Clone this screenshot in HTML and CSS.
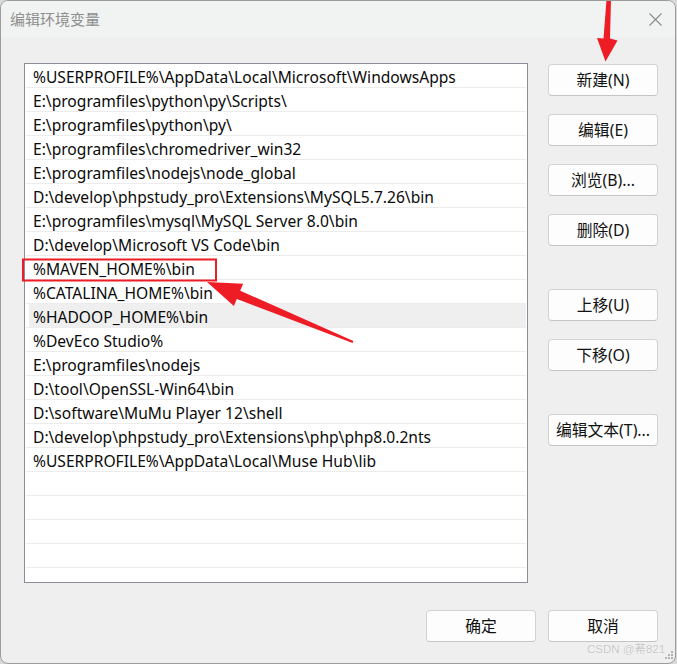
FILE: index.html
```html
<!DOCTYPE html>
<html lang="zh-CN">
<head>
<meta charset="utf-8">
<title>编辑环境变量</title>
<link rel="stylesheet" href="styles.css">
</head>
<body>
<div class="window">
  <div class="titlebar">
    <span class="title">编辑环境变量</span>
    <svg class="close" width="13" height="13" viewBox="0 0 13 13"><path d="M0.5 0.5 L12.5 12.5 M12.5 0.5 L0.5 12.5" stroke="#8a8a8a" stroke-width="1.1" fill="none"/></svg>
  </div>
  <div class="content">
    <div class="main">
      <div class="list">
        <div class="row">%USERPROFILE%\AppData\Local\Microsoft\WindowsApps</div>
        <div class="row">E:\programfiles\python\py\Scripts\</div>
        <div class="row">E:\programfiles\python\py\</div>
        <div class="row">E:\programfiles\chromedriver_win32</div>
        <div class="row">E:\programfiles\nodejs\node_global</div>
        <div class="row">D:\develop\phpstudy_pro\Extensions\MySQL5.7.26\bin</div>
        <div class="row">E:\programfiles\mysql\MySQL Server 8.0\bin</div>
        <div class="row">D:\develop\Microsoft VS Code\bin</div>
        <div class="row">%MAVEN_HOME%\bin</div>
        <div class="row">%CATALINA_HOME%\bin</div>
        <div class="row row-hover">%HADOOP_HOME%\bin</div>
        <div class="row">%DevEco Studio%</div>
        <div class="row">E:\programfiles\nodejs</div>
        <div class="row">D:\tool\OpenSSL-Win64\bin</div>
        <div class="row">D:\software\MuMu Player 12\shell</div>
        <div class="row">D:\develop\phpstudy_pro\Extensions\php\php8.0.2nts</div>
        <div class="row">%USERPROFILE%\AppData\Local\Muse Hub\lib</div>
        <div class="row"></div>
        <div class="row"></div>
        <div class="row"></div>
        <div class="row"></div>
        <div class="row"></div>
      </div>
      <div class="side">
        <button class="btn">新建(N)</button>
        <button class="btn">编辑(E)</button>
        <button class="btn">浏览(B)...</button>
        <button class="btn">删除(D)</button>
        <button class="btn btn-spaced">上移(U)</button>
        <button class="btn">下移(O)</button>
        <button class="btn btn-spaced">编辑文本(T)...</button>
      </div>
    </div>
    <div class="footer">
      <button class="btn">确定</button>
      <button class="btn">取消</button>
    </div>
  </div>
  <svg class="annot" width="677" height="664" viewBox="0 0 677 664">
    <polygon fill="#ee1c25" points="606.5,0 611,0 610,38.5 617.5,40.5 605.5,61.5 597,38 603.5,38.5"/>
    <rect x="23" y="259.5" width="193" height="21" fill="none" stroke="#ee1c25" stroke-width="2"/>
    <polygon fill="#ee1c25" points="207,282 243.1,283.8 240.2,290.7 353.4,341.1 352.6,342.9 236.8,299.1 233.9,306"/>
  </svg>
  <div class="watermark">CSDN @莃821</div>
  <svg class="grip" width="10" height="10" viewBox="0 0 10 10">
    <rect x="7" y="0" width="2" height="2" fill="#b4b4b4"/>
    <rect x="4" y="3" width="2" height="2" fill="#b4b4b4"/>
    <rect x="7" y="3" width="2" height="2" fill="#b4b4b4"/>
    <rect x="1" y="6" width="2" height="2" fill="#b4b4b4"/>
    <rect x="4" y="6" width="2" height="2" fill="#b4b4b4"/>
    <rect x="7" y="6" width="2" height="2" fill="#b4b4b4"/>
  </svg>
</div>
</body>
</html>
```

FILE: styles.css
```css
* { box-sizing: border-box; }

html, body {
  margin: 0;
  padding: 0;
  background: #d9d9d9;
}

body {
  width: 677px;
  height: 664px;
  overflow: hidden;
  font-family: "Noto Sans", "Noto Sans CJK SC", sans-serif;
}

.window {
  position: relative;
  width: 676px;
  height: 664px;
  border: 1px solid #9c9c9c;
  border-radius: 8px;
  background: #efefef;
  overflow: hidden;
  display: flex;
  flex-direction: column;
}

.titlebar {
  height: 36px;
  flex: none;
  background: #f1f3f3;
  display: flex;
  align-items: center;
  justify-content: space-between;
  padding: 0 13px 0 9px;
}

.title {
  font-family: "Noto Sans CJK SC", sans-serif;
  font-size: 15px;
  color: #8e8e8e;
  line-height: 20px;
}

.close {
  display: block;
}

.content {
  flex: 1;
  padding: 26px 17px 0 23px;
  display: flex;
  flex-direction: column;
}

.main {
  display: flex;
  gap: 20px;
  align-items: flex-start;
}

.list {
  width: 504px;
  height: 520px;
  background: #ffffff;
  border: 1px solid #8a8c96;
  padding: 0 1px;
  overflow: hidden;
}

.row {
  height: 24px;
  border-bottom: 1px solid #ececec;
  padding: 3px 0 0 7px;
  font-family: "Noto Sans", "Noto Sans CJK SC", sans-serif;
  font-size: 15.6px;
  line-height: 20px;
  color: #0a0a0a;
  white-space: nowrap;
}

.row-hover {
  background: linear-gradient(to right, #ffffff 3px, #efefef 3px);
}

.side {
  margin-top: 1px;
  display: flex;
  flex-direction: column;
  gap: 18px;
}

.btn {
  width: 110px;
  height: 32px;
  margin: 0;
  padding: 0;
  background: #fdfdfd;
  border: 1px solid #d3d3d3;
  border-bottom-color: #c4c4c4;
  border-radius: 4px;
  font-family: "Noto Sans", "Noto Sans CJK SC", sans-serif;
  font-size: 15.8px;
  line-height: 30px;
  color: #111111;
  text-align: center;
}

.btn-spaced {
  margin-top: 25px;
}

.footer {
  margin-top: 27px;
  display: flex;
  justify-content: flex-end;
  gap: 12px;
}

.annot {
  position: absolute;
  left: -1px;
  top: -1px;
  pointer-events: none;
}

.watermark {
  position: absolute;
  left: 586px;
  top: 641px;
  font-family: "Liberation Sans", "Noto Sans CJK SC", sans-serif;
  font-size: 11.5px;
  line-height: 14px;
  color: #c6c6c6;
  text-shadow: 0 0 1px #ffffff, 0 0 1px #ffffff;
  white-space: nowrap;
}

.grip {
  position: absolute;
  right: 1px;
  bottom: 2px;
  display: block;
}
```
